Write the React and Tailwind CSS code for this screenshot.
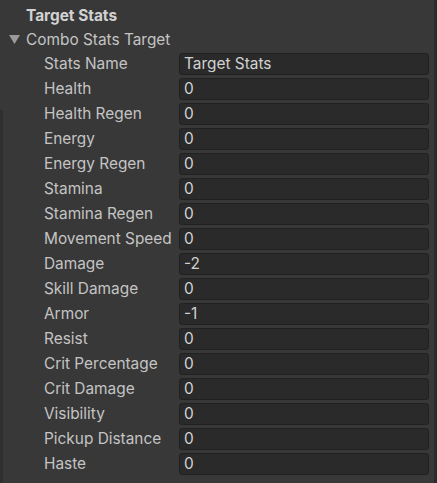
import React from "react";

const rows = [
  ["Stats Name", "Target Stats"],
  ["Health", "0"],
  ["Health Regen", "0"],
  ["Energy", "0"],
  ["Energy Regen", "0"],
  ["Stamina", "0"],
  ["Stamina Regen", "0"],
  ["Movement Speed", "0"],
  ["Damage", "-2"],
  ["Skill Damage", "0"],
  ["Armor", "-1"],
  ["Resist", "0"],
  ["Crit Percentage", "0"],
  ["Crit Damage", "0"],
  ["Visibility", "0"],
  ["Pickup Distance", "0"],
  ["Haste", "0"],
];

export default function App() {
  return (
    <div
      className="relative w-[437px] h-[483px] bg-[#383838] overflow-hidden text-[15.4px] text-[#c4c4c4]"
      style={{ fontFamily: "Inter, 'Noto Sans', sans-serif" }}
    >
      <div className="absolute right-0 top-0 h-full w-[3px] bg-[#2b2b2b]" />
      <div className="absolute left-0 top-[110px] bottom-0 w-[3px] bg-[#2f2f2f]" />
      <div className="pt-[4px]">
        <div className="h-[24px] flex items-center pl-[26px] font-bold text-[#d2d2d2]">
          Target Stats
        </div>
        <div className="h-[23px] flex items-center">
          <div className="w-[26px] flex justify-center pl-[6px] pr-[3px]">
            <svg width="11" height="9" viewBox="0 0 11 9">
              <polygon points="0,0 11,0 5.5,9" fill="#9a9a9a" />
            </svg>
          </div>
          <span>Combo Stats Target</span>
        </div>
        {rows.map(([label, value]) => (
          <div key={label} className="h-[25px] flex items-center">
            <div className="w-[179px] pl-[44px] whitespace-nowrap">{label}</div>
            <div className="w-[250px] h-[22px] rounded-[3px] border border-[#212121] bg-[#2a2a2a] flex items-center pl-[4px] text-[#d2d2d2]">
              {value}
            </div>
          </div>
        ))}
      </div>
    </div>
  );
}
